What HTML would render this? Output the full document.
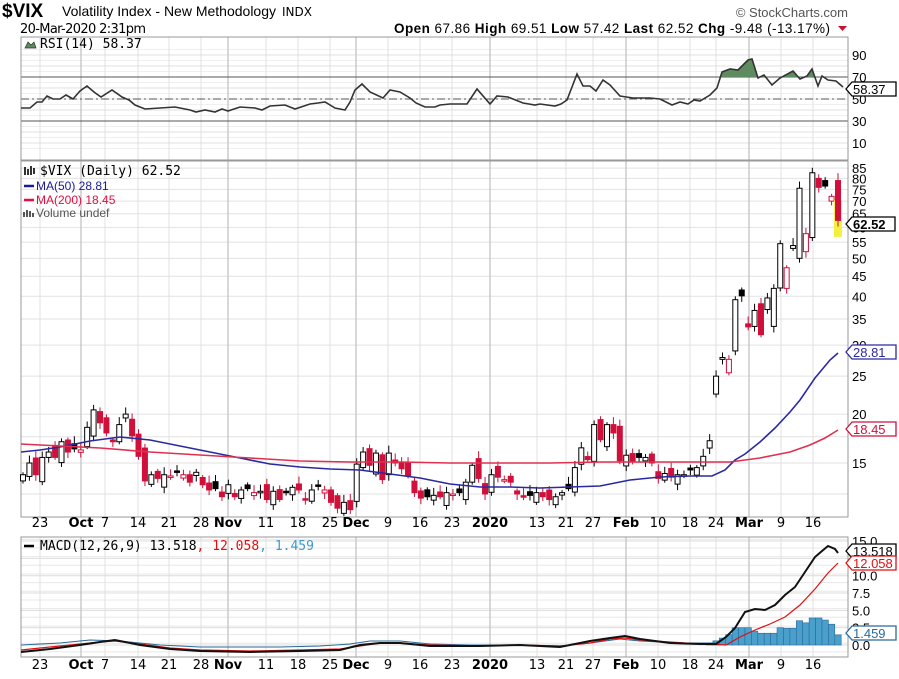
<!DOCTYPE html>
<html><head><meta charset="utf-8"><style>
body{margin:0;background:#fff;width:899px;height:679px;overflow:hidden;font-family:"Liberation Sans",sans-serif}
svg{position:absolute;left:0;top:0}
</style></head><body>
<svg id="s" width="899" height="679" viewBox="0 0 899 679" font-family="Liberation Sans, sans-serif">
<text x="2" y="17" font-size="19" font-weight="bold">$VIX</text>
<text x="62" y="16" font-size="14">Volatility Index - New Methodology</text>
<text x="282" y="16" font-size="12" font-family="DejaVu Sans">INDX</text>
<text x="848" y="17" font-size="13" fill="#555" text-anchor="end">© StockCharts.com</text>
<text x="20" y="33" font-size="13" font-family="DejaVu Sans" textLength="126">20-Mar-2020 2:31pm</text>
<text x="394" y="33" font-size="13.5" textLength="436"><tspan font-weight="bold">Open</tspan> 67.86  <tspan font-weight="bold">High</tspan> 69.51  <tspan font-weight="bold">Low</tspan> 57.42  <tspan font-weight="bold">Last</tspan> 62.52  <tspan font-weight="bold">Chg</tspan> -9.48 (-13.17%)</text>
<path d="M838 26h9l-4.5 5z" fill="#c8102e"/>
<g id="g"></g>
<text x="40" y="48" font-size="13" font-family="DejaVu Sans Mono, monospace">RSI(14) 58.37</text>
<path d="M25 48l3-6 3 3 3-3 2 6z" fill="#5b8a5b" stroke="#333" stroke-width=".7"/>
<text x="40" y="175" font-size="13" font-family="DejaVu Sans Mono, monospace">$VIX (Daily) 62.52</text>
<path d="M25 167v8M28 169v6M31 166v9M34 168v6" stroke="#000" stroke-width="1.6"/>
<path d="M24 186h10" stroke="#1a1a9a" stroke-width="2.5"/><text x="36" y="190" font-size="12" fill="#1a1a9a">MA(50) 28.81</text>
<path d="M24 200h10" stroke="#e01040" stroke-width="2.5"/><text x="36" y="204" font-size="12" fill="#e01040">MA(200) 18.45</text>
<path d="M24 217v-5M27 217v-7M30 217v-6M33 217v-4" stroke="#555" stroke-width="2"/><text x="36" y="217" font-size="12" fill="#555">Volume undef</text>
<path d="M24 546h10" stroke="#000" stroke-width="2.5"/>
<text x="40" y="550" font-size="13" font-family="DejaVu Sans Mono, monospace">MACD(12,26,9) 13.518<tspan fill="#e01010">, 12.058</tspan><tspan fill="#3a9ad0">, 1.459</tspan></text>
</svg>
<script>
const g=document.getElementById('g');let h='';
const L=21,R=848;
function ln(x1,y1,x2,y2,c,w,extra){h+=`<line x1="${x1}" y1="${y1}" x2="${x2}" y2="${y2}" stroke="${c}" stroke-width="${w||1}" ${extra||''}/>`}
function tx(x,y,t,o){h+=`<text x="${x}" y="${y}" ${o||''}>${t}</text>`}
const dl=[[40,'23'],[81,'Oct',1],[105,'7'],[138,'14'],[169,'21'],[201,'28'],[228,'Nov',1],[266,'11'],[298,'18'],[330,'25'],[356,'Dec',1],[388,'9'],[420,'16'],[452,'23'],[490,'2020',1],[537,'13'],[566,'21'],[593,'27'],[626,'Feb',1],[658,'10'],[690,'18'],[716,'24'],[749,'Mar',1],[781,'9'],[813,'16']];
const panels=[[37,160],[161,517],[537,657]];
const ry=v=>99-(v-50)*1.1;
for(let v=10;v<=90;v+=10){ln(L,ry(v),R,ry(v),'#e2e2e2')}
[5,15,25,35,45,55,65,75,85,95].forEach(v=>ln(L,ry(v),R,ry(v),'#f0f0f0'));
const py=p=>463-170*Math.log(p/15);
[15,20,25,30,35,40,45,50,55,60,65,70,75,80,85,12.5,17.5].forEach(p=>ln(L,py(p),R,py(p),'#e2e2e2'));
const my=v=>645-v*6.93;
for(let v=-1;v<=16;v+=1.25){ln(L,my(v),R,my(v),'#e8e8e8')}
for(let v=0;v<=15;v+=2.5){ln(L,my(v),R,my(v),'#dcdcdc')}
panels.forEach(([a,b])=>dl.forEach(d=>ln(d[0],a,d[0],b,d[2]?'#c4c4c4':'#e0e0e0',d[2]?1.3:1)));
ln(L,ry(70),R,ry(70),'#555');ln(L,ry(30),R,ry(30),'#555');ln(L,ry(50),R,ry(50),'#555',1,'stroke-dasharray="8,3,2,3"');
panels.forEach(([a,b])=>h+=`<rect x="${L}" y="${a}" width="${R-L}" height="${b-a}" fill="none" stroke="#999"/>`);
[527,669].forEach(y=>dl.forEach(d=>tx(d[0],y,d[1],`font-size="13" text-anchor="middle" font-family="DejaVu Sans" ${d[2]?'font-weight="bold"':''}`)));
[90,70,50,30,10].forEach(v=>tx(852,ry(v)+5,v,'font-size="13"'));
[85,80,75,70,65,60,55,50,45,40,35,30,25,20,15].forEach(p=>tx(852,py(p)+5,p,'font-size="13"'));
['15.0','12.5','10.0','7.5','5.0','2.5','0.0'].forEach(v=>tx(852,my(+v)+5,v,'font-size="13"'));
const rp=[[21,108],[30,108],[37,102],[42,102],[47,96],[53,99],[60,99],[66,95],[73,99],[80,91],[87,86],[94,92],[101,97],[112,90],[122,97],[129,100],[135,105],[145,109],[160,108],[175,107],[190,110],[196,112],[205,110],[215,112],[222,109],[228,111],[240,107],[255,108],[262,110],[270,106],[285,105],[295,109],[310,104],[318,103],[325,102],[335,108],[345,110],[350,102],[355,90],[362,84],[370,92],[383,98],[390,90],[400,92],[410,98],[416,103],[425,107],[435,107],[440,105],[450,104],[467,104],[477,89],[490,104],[497,96],[508,97],[513,99],[523,103],[535,105],[540,104],[555,106],[561,104],[567,100],[577,74],[583,86],[590,86],[596,91],[603,80],[610,85],[620,96],[633,98],[650,98],[660,99],[672,105],[680,102],[688,104],[694,100],[700,101],[710,95],[717,88],[722,72],[730,69],[738,70],[745,63],[748,60],[752,59],[758,78],[764,75],[772,85],[780,78],[793,71],[800,79],[807,76],[812,69],[818,86],[822,76],[828,80],[836,81],[843,87]];
const rs=rp.map(p=>p.join(',')).join(' ');
h+=`<clipPath id="c7"><rect x="21" y="37" width="827" height="40"/></clipPath>`;
h+=`<polygon points="${rs} 843,77 21,77" fill="#5e8c5e" clip-path="url(#c7)"/>`;
h+=`<polyline points="${rs}" fill="none" stroke="#333" stroke-width="1.6"/>`;
const cl=[14,15,14,15.5,16,15.5,17,16,16.3,16.2,18.5,20.5,19,17.9,17,18.8,20,17.6,15.6,13.5,14,13.7,14,13.9,14.3,14,13.4,14.2,13.2,12.8,12.9,12.3,13.2,12.3,12.8,12.9,12.6,12.7,12.1,12.7,12.1,12.7,13,12.8,12.1,12.8,13.1,12.8,11.9,11.5,11.9,11.4,14.9,16,14.8,15.9,13.6,15.9,15,14.5,13.9,12.6,12.2,12.3,12.4,12.3,12.6,12.5,12.6,13.4,14.8,13.7,12.5,14,13.8,13.6,13.4,12.5,12.3,12.4,12.6,12.3,12.1,12.3,12.6,12.9,14.6,16.4,15.3,18.8,17.2,18.8,17.9,15.2,15.7,15.1,15.5,15.5,15,13.7,14.1,13.8,14,14,14.4,14.6,15.6,17.1,25,27.9,27.6,39.2,40.1,33.4,36.8,31.9,39.6,41.9,54.5,47.3,53.9,75.5,57.8,82.7,75.9,76.5,72,62.5];
const op={108:22.5,109:27.6,110:25.5,111:29,112:41.5,113:34,114:33.5,116:37,117:33.5,118:42,119:41.9,120:53,121:50,122:52,123:56.5,124:80,125:79,126:70,127:79,128:67.5};
const N=cl.length,sp=(838-23)/(N-1);
for(let i=0;i<N;i++){const x=23+i*sp,c=cl[i],o=op[i]!==undefined?op[i]:(i?cl[i-1]*(1+((i*37%11)-5)/100):13.5);
const hi=Math.max(o,c)*(1.015+(i*13%7)/200),lo=Math.min(o,c)*(0.985-(i*17%5)/200);
const up=c>=o,red=i>0&&c<cl[i-1],col=red?'#d0103a':'#000';
const yt=py(Math.max(o,c)),yb=py(Math.min(o,c));
if(i==N-1)h+=`<rect x="${x-4}" y="${py(69.5)-2}" width="8" height="${py(57.4)-py(69.5)+4}" fill="#f4f040"/>`;
ln(x,py(hi),x,py(lo),col,1);
h+=`<rect x="${x-2.5}" y="${yt}" width="5" height="${Math.max(1.5,yb-yt)}" fill="${up?'#fff':col}" stroke="${col}" stroke-width="1"/>`;}
h+=`<polyline points="21,452 40,450 60,447 90,441 120,437 150,440 180,446 210,452 240,458 270,464 300,467 330,469 360,470 390,474 420,478 450,484 480,487 510,487 540,488 570,487 600,486 630,480 660,477 690,476 712,476 725,470 735,460 745,454 760,442 775,428 790,412 800,400 815,378 830,360 838,353" fill="none" stroke="#2a2aa0" stroke-width="1.6"/>`;
h+=`<polyline points="21,444 60,446 100,448 150,452 200,455 250,458 300,461 350,462 400,462 450,463 500,463 550,463 600,462 650,462 700,462 730,462 760,458 790,452 810,445 825,438 838,430" fill="none" stroke="#e03050" stroke-width="1.6"/>`;
const hv=[0.3,0.6,1,1.5,2.5,2.5,2.5,2,1.7,1.7,1.7,2.5,2.4,2.4,3.5,3.2,3.9,3.9,3.6,3.0,1.46];
hv.forEach((v,k)=>{const x=838-(hv.length-1-k)*sp;h+=`<rect x="${x-3.2}" y="${my(v)}" width="6.4" height="${my(0)-my(v)}" fill="#4a9fcb" stroke="#2a6a9a" stroke-width=".6"/>`});
h+=`<polyline points="21,645 60,643 90,640 120,641 160,645 200,647 240,647 280,647 320,646 350,644 370,641 400,641 430,644 470,645 520,645 560,646 590,643 620,639 640,641 680,643 715,643" fill="none" stroke="#2a6a9a" stroke-width="1"/>`;
h+=`<polyline points="21,650 50,647 80,644 100,642 115,641 140,644 170,648 200,650 250,651 300,650 340,649 360,646 380,643 400,643 430,645 480,646 520,645 560,646 590,643 610,639 625,638 640,640 670,642 700,644 726,645" fill="none" stroke="#e01010" stroke-width="1.2"/>`;
h+=`<polyline points="21,652 50,649 80,645 100,642 115,640 140,645 170,649 200,651 250,652 300,651 340,650 360,645 380,643 400,643 430,646 480,646 520,645 560,647 590,641 610,638 625,636 640,639 670,643 700,644 716,644 726,637 735,628 745,612 755,609 765,610 775,605 785,595 795,587 805,572 815,557 822,551 828,546 835,549 838,553" fill="none" stroke="#111" stroke-width="2"/>`;
h+=`<polyline points="726,645 740,637 755,630 770,624 785,617 800,605 815,589 828,573 838,563" fill="none" stroke="#e01010" stroke-width="1.2"/>`;
function tag(y,t,c,bold){const w=bold?43:44;h+=`<path d="M846 ${y} l6 -7 h${w} v14 h-${w} z" fill="#fff" stroke="${c}" stroke-width="1.3"/>`;tx(853,y+5,t,`font-size="13" fill="${c}" ${bold?'font-weight="bold"':''}`)}
tag(89,'58.37','#000');tag(224,'62.52','#000',1);tag(352,'28.81','#2a2aa0');tag(429,'18.45','#d0103a');tag(551,'13.518','#000');tag(563,'12.058','#e01010');tag(633,'1.459','#2a6a9a');
g.innerHTML=h;
</script>
</body></html>
